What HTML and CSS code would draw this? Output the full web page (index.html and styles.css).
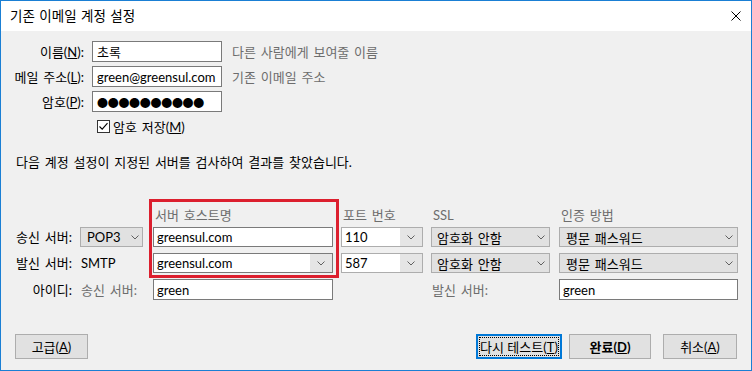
FILE: index.html
```html
<!DOCTYPE html>
<html lang="ko">
<head>
<meta charset="utf-8">
<title>기존 이메일 계정 설정</title>
<link rel="stylesheet" href="styles.css">
</head>
<body>
<div class="window">
  <div class="titlebar">
    <span class="title">기존 이메일 계정 설정</span>
    <svg class="close" width="10" height="10" viewBox="0 0 10 10"><path d="M0.5 0.5L9.5 9.5M9.5 0.5L0.5 9.5" stroke="#000" stroke-width="1" fill="none"/></svg>
  </div>
  <div class="content">
    <div class="identity">
      <span class="lbl">이름(<u>N</u>):</span>
      <div class="input">초록</div>
      <span class="hint">다른 사람에게 보여줄 이름</span>

      <span class="lbl">메일 주소(<u>L</u>):</span>
      <div class="input">green@greensul.com</div>
      <span class="hint">기존 이메일 주소</span>

      <span class="lbl">암호(<u>P</u>):</span>
      <div class="input"><span class="dots">●●●●●●●●●●</span></div>
      <span></span>

      <div class="check-row">
        <svg class="checkbox" width="13" height="13" viewBox="0 0 13 13"><rect x="0.5" y="0.5" width="12" height="12" fill="#fff" stroke="#333"/><path d="M2.5 6.5L5.2 9.2L10.5 3.2" stroke="#000" stroke-width="1.1" fill="none"/></svg>
        <span>암호 저장(<u>M</u>)</span>
      </div>
    </div>

    <p class="sentence">다음 계정 설정이 지정된 서버를 검사하여 결과를 찾았습니다.</p>

    <div class="servers">
      <span></span>
      <span></span>
      <span class="head">서버 호스트명</span>
      <span class="head">포트 번호</span>
      <span class="head">SSL</span>
      <span class="head">인증 방법</span>

      <span class="slbl">송신 서버:</span>
      <div class="drop pop"><span>POP3</span><svg class="arrow" width="8" height="5" viewBox="0 0 8 5"><path d="M0.5 0.5L4 4L7.5 0.5" stroke="#606060" fill="none"/></svg></div>
      <div class="input host">greensul.com</div>
      <div class="combo light"><span class="val">110</span><span class="btn"><svg class="arrow" width="8" height="5" viewBox="0 0 8 5"><path d="M0.5 0.5L4 4L7.5 0.5" stroke="#606060" fill="none"/></svg></span></div>
      <div class="drop ssl"><span>암호화 안함</span><svg class="arrow" width="8" height="5" viewBox="0 0 8 5"><path d="M0.5 0.5L4 4L7.5 0.5" stroke="#606060" fill="none"/></svg></div>
      <div class="drop auth"><span>평문 패스워드</span><svg class="arrow" width="8" height="5" viewBox="0 0 8 5"><path d="M0.5 0.5L4 4L7.5 0.5" stroke="#606060" fill="none"/></svg></div>

      <span class="slbl">발신 서버:</span>
      <span class="plain">SMTP</span>
      <div class="combo dark"><span class="val">greensul.com</span><span class="btn"><svg class="arrow" width="8" height="5" viewBox="0 0 8 5"><path d="M0.5 0.5L4 4L7.5 0.5" stroke="#606060" fill="none"/></svg></span></div>
      <div class="combo light"><span class="val">587</span><span class="btn"><svg class="arrow" width="8" height="5" viewBox="0 0 8 5"><path d="M0.5 0.5L4 4L7.5 0.5" stroke="#606060" fill="none"/></svg></span></div>
      <div class="drop ssl"><span>암호화 안함</span><svg class="arrow" width="8" height="5" viewBox="0 0 8 5"><path d="M0.5 0.5L4 4L7.5 0.5" stroke="#606060" fill="none"/></svg></div>
      <div class="drop auth"><span>평문 패스워드</span><svg class="arrow" width="8" height="5" viewBox="0 0 8 5"><path d="M0.5 0.5L4 4L7.5 0.5" stroke="#606060" fill="none"/></svg></div>

      <span class="slbl">아이디:</span>
      <span class="plain gray">송신 서버:</span>
      <div class="input host">green</div>
      <span></span>
      <span class="plain gray">발신 서버:</span>
      <div class="input host">green</div>
    </div>

    <div class="buttons">
      <button class="btn-win adv">고급(<u>A</u>)</button>
      <div class="right-buttons">
        <button class="btn-win focus retest">다시 테스트(<u>T</u>)</button>
        <button class="btn-win done">완료(<u>D</u>)</button>
        <button class="btn-win cancel">취소(<u>A</u>)</button>
      </div>
    </div>
  </div>
  <div class="highlight"></div>
</div>
</body>
</html>
```
FILE: styles.css
```css
* { box-sizing: border-box; }
html, body { margin: 0; padding: 0; }
body {
  width: 752px;
  height: 371px;
  overflow: hidden;
  font-family: Lato, "Noto Sans CJK KR", sans-serif;
  font-size: 13px;
  word-spacing: 1.5px;
  color: #000;
  background: #f0f0f0;
}
.window {
  position: relative;
  width: 752px;
  height: 371px;
  border: 1px solid #1a7fd4;
  background: #f0f0f0;
  display: flex;
  flex-direction: column;
}
.titlebar {
  height: 30px;
  flex: none;
  background: #fff;
  display: flex;
  align-items: center;
  justify-content: space-between;
  padding: 0 10px 0 9px;
}
.title { font-size: 13.5px; line-height: 20px; word-spacing: 1px; }
.close { display: block; }
.content {
  flex: 1;
  padding-top: 10px;
  display: flex;
  flex-direction: column;
}
.identity {
  display: grid;
  grid-template-columns: 83px 130px auto;
  grid-auto-rows: 21px;
  row-gap: 4px;
  column-gap: 8px;
}
.lbl { text-align: right; align-self: center; line-height: 16px; white-space: nowrap; }
.input {
  background: #fff;
  border: 1px solid #7a7a7a;
  padding-left: 4px;
  display: flex;
  align-items: center;
  white-space: nowrap;
  overflow: hidden;
}
.dots {
  font-family: "Noto Sans CJK KR", sans-serif;
  font-size: 11px;
  letter-spacing: -0.3px;
}
.hint { color: #6d6d6d; margin-left: 2px; align-self: center; white-space: nowrap; }
.check-row {
  grid-column: 2 / span 2;
  display: flex;
  align-items: center;
  gap: 3px;
  padding-left: 5px;
}
.checkbox { display: block; flex: none; }
.sentence { margin: 17px 0 0 15px; line-height: 16px; }
.servers {
  display: grid;
  grid-template-columns: 71px 65px 180px 82px 120px 179px;
  grid-template-rows: 24px 20px 20px 21px;
  column-gap: 8px;
  row-gap: 6px;
  margin-top: 27px;
}
.head {
  color: #6d6d6d;
  align-self: end;
  line-height: 16px;
  margin-bottom: -2px;
  padding-left: 2px;
}
.slbl { text-align: right; align-self: center; line-height: 16px; white-space: nowrap; }
.plain { align-self: center; padding-left: 1px; white-space: nowrap; }
.gray { color: #6d6d6d; }
.host { padding-left: 3px; }
.drop {
  background: #e1e1e1;
  border: 1px solid #adadad;
  display: flex;
  align-items: center;
  justify-content: space-between;
  padding: 0 4px 0 5px;
  white-space: nowrap;
}
.pop { width: 63px; padding-left: 6px; padding-right: 3px; }
.ssl { width: 119px; }
.auth { width: 179px; padding-left: 6px; }
.arrow { display: block; flex: none; }
.combo {
  display: flex;
  border: 1px solid #adadad;
  background: #fff;
}
.combo.dark { border-color: #7a7a7a; }
.combo .val { flex: 1; display: flex; align-items: center; padding-left: 3px; white-space: nowrap; }
.combo .btn {
  width: 22px;
  background: #e5e5e5;
  display: flex;
  align-items: center;
  justify-content: center;
}
.buttons {
  margin-top: 34px;
  display: flex;
  justify-content: space-between;
  padding: 0 14px;
}
.right-buttons { display: flex; }
.btn-win {
  height: 25px;
  font: inherit;
  word-spacing: 0;
  color: #000;
  background: #e1e1e1;
  border: 1px solid #adadad;
  padding: 0;
  margin: 0;
  display: flex;
  align-items: center;
  justify-content: center;
  white-space: nowrap;
}
.adv { width: 73px; }
.retest {
  width: 86px;
  border: 2px solid #0078d7;
  outline: 1px dotted #000;
  outline-offset: -4px;
}
.done { width: 82px; margin-left: 7px; font-weight: bold; }
.cancel { width: 74px; margin-left: 12px; }
.highlight {
  position: absolute;
  left: 148px;
  top: 198px;
  width: 190px;
  height: 79px;
  border: 3px solid #dc1f2e;
  pointer-events: none;
}
```
